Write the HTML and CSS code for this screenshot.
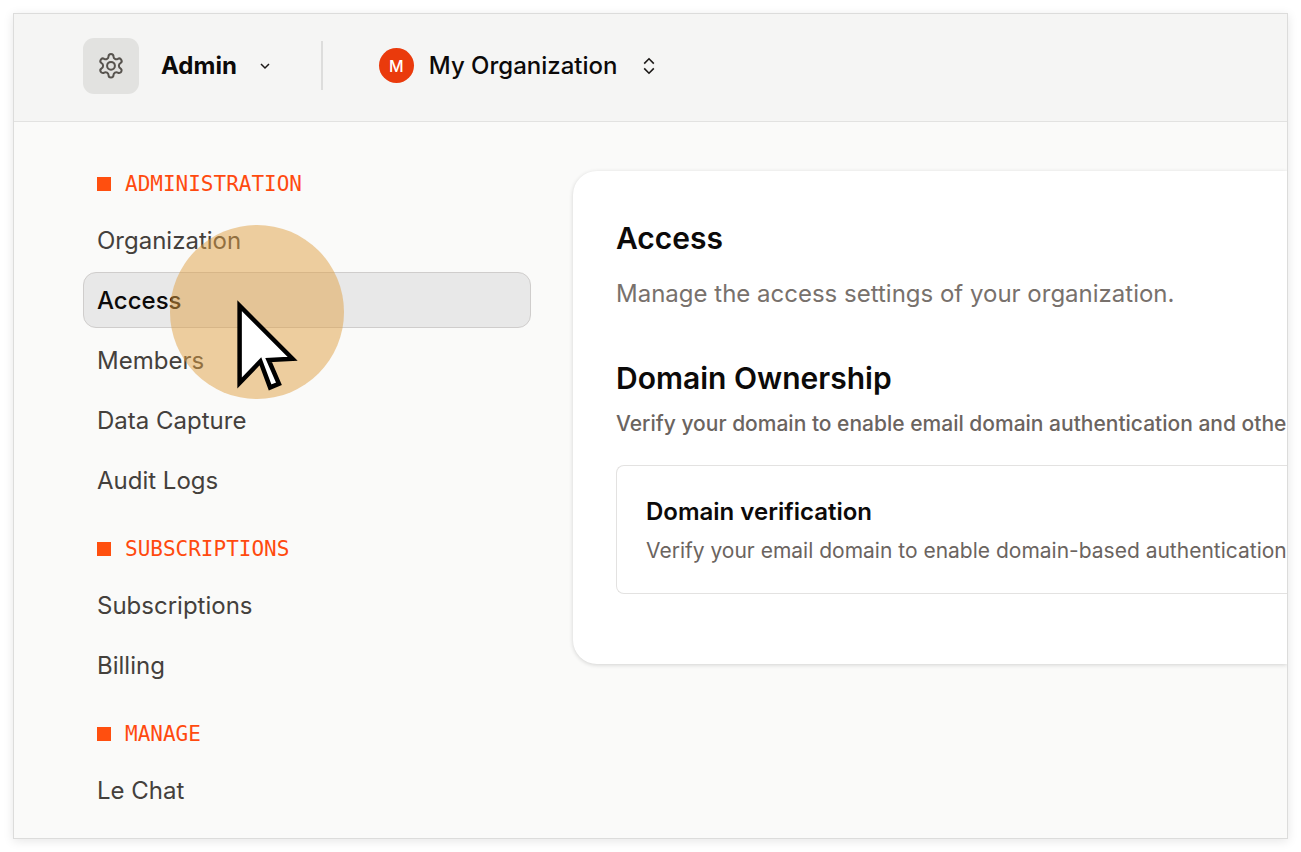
FILE: index.html
```
<!DOCTYPE html>
<html lang="en">
<head>
    <meta charset="UTF-8">
    <meta name="viewport" content="width=device-width, initial-scale=1.0">
    <title>Admin - Access</title>
    <link rel="stylesheet" href="styles.css">
</head>
<body>
    <div class="app">
        <header class="topbar">
            <button type="button" class="menu-button">
                <span class="menu-icon">
                    <svg width="28" height="28" viewBox="0 0 28 28" fill="none" stroke="#57534e" stroke-width="2" stroke-linejoin="round">
                        <path d="M11.5 4.4a2.5 2.5 0 0 1 5 0a2.9 2.9 0 0 0 4.3 2.5a2.5 2.5 0 0 1 2.6 4.3a2.9 2.9 0 0 0 0 5.1a2.5 2.5 0 0 1-2.6 4.3a2.9 2.9 0 0 0-4.3 2.5a2.5 2.5 0 0 1-5 0a2.9 2.9 0 0 0-4.3-2.5a2.5 2.5 0 0 1-2.6-4.3a2.9 2.9 0 0 0 0-5.1a2.5 2.5 0 0 1 2.6-4.3a2.9 2.9 0 0 0 4.3-2.5z"/>
                        <circle cx="14" cy="13.8" r="3.9"/>
                    </svg>
                </span>
                <span class="menu-name">Admin</span>
                <svg width="12" height="12" viewBox="0 0 12 12" fill="none" stroke="#1c1917" stroke-width="1.5">
                    <path d="M2 4l4 4 4-4"/>
                </svg>
            </button>
            <span class="divider"></span>
            <button type="button" class="org-button">
                <span class="avatar">M</span>
                <span class="org-name">My Organization</span>
                <svg width="12" height="18" viewBox="0 0 12 18" fill="none" stroke="#1c1917" stroke-width="1.6">
                    <path d="M1.2 6.6l4.8-4.8 4.8 4.8M1.2 11.4l4.8 4.8 4.8-4.8"/>
                </svg>
            </button>
        </header>

        <div class="layout">
            <nav class="sidebar">
                <section class="nav-group">
                    <h2 class="nav-title">ADMINISTRATION</h2>
                    <a href="#" class="nav-link">Organization</a>
                    <a href="#" class="nav-link active">Access
                        <span class="highlight">
                            <svg class="pointer" width="62" height="92" viewBox="0 0 62 92" fill="#fff" stroke="#000" stroke-width="4.5">
                                <path d="M2.6 5.7V83L23.4 61.3L33.1 87.4L41.9 83.7L31.6 60L55.5 58.7Z"/>
                            </svg>
                        </span>
                    </a>
                    <a href="#" class="nav-link">Members</a>
                    <a href="#" class="nav-link">Data Capture</a>
                    <a href="#" class="nav-link">Audit Logs</a>
                </section>
                <section class="nav-group">
                    <h2 class="nav-title">SUBSCRIPTIONS</h2>
                    <a href="#" class="nav-link">Subscriptions</a>
                    <a href="#" class="nav-link">Billing</a>
                </section>
                <section class="nav-group">
                    <h2 class="nav-title">MANAGE</h2>
                    <a href="#" class="nav-link">Le Chat</a>
                </section>
            </nav>

            <main class="card">
                <h1 class="heading">Access</h1>
                <p class="lead">Manage the access settings of your organization.</p>
                <h2 class="heading">Domain Ownership</h2>
                <p class="description">Verify your domain to enable email domain authentication and other</p>
                <div class="panel">
                    <h3 class="panel-title">Domain verification</h3>
                    <p class="panel-text">Verify your email domain to enable domain-based authentication</p>
                </div>
            </main>
        </div>
    </div>
</body>
</html>
```
FILE: styles.css
```
* {
    box-sizing: border-box;
}

body {
    margin: 0;
    padding: 13px;
    background-color: #fff;
    font-family: Inter, "Liberation Sans", sans-serif;
    color: #0c0a09;
}

h1, h2, h3, p {
    margin: 0;
}

button {
    display: flex;
    align-items: center;
    padding: 0;
    border: none;
    background: none;
    font-family: inherit;
    color: inherit;
    cursor: pointer;
}

.app {
    min-height: calc(100vh - 26px);
    border: 1px solid #dcdcdb;
    background-color: #fafaf9;
    box-shadow: 0 2px 10px rgba(0, 0, 0, 0.1);
    overflow: hidden;
}

/* Top bar */
.topbar {
    display: flex;
    align-items: center;
    height: 108px;
    padding: 0 69px 4px;
    border-bottom: 1px solid #e2e2e1;
    background-color: #f5f5f4;
}

.menu-icon {
    display: flex;
    align-items: center;
    justify-content: center;
    width: 56px;
    height: 56px;
    margin-right: 22px;
    border-radius: 11px;
    background-color: #e2e2e0;
}

.menu-name {
    margin-right: 22px;
    font-size: 24px;
    font-weight: 700;
}

.divider {
    width: 2px;
    height: 49px;
    margin: 0 56px 0 50px;
    background-color: #dddddc;
}

.avatar {
    display: flex;
    align-items: center;
    justify-content: center;
    width: 35px;
    height: 35px;
    margin-right: 15px;
    border-radius: 50%;
    background-color: #ea3a0c;
    color: #fff;
    font-size: 16px;
    font-weight: 500;
}

.org-name {
    margin-right: 25px;
    font-size: 24px;
    font-weight: 500;
}

/* Sidebar */
.layout {
    display: flex;
    align-items: flex-start;
    gap: 42px;
    padding: 34px 0 20px 69px;
}

.sidebar {
    display: flex;
    flex: 0 0 448px;
    flex-direction: column;
    gap: 13px;
}

.nav-group {
    display: flex;
    flex-direction: column;
    gap: 4px;
}

.nav-title {
    display: flex;
    align-items: center;
    gap: 14px;
    height: 56px;
    margin-bottom: -4px;
    padding-left: 14px;
    color: #ff4a0f;
    font-family: "DejaVu Sans Mono", monospace;
    font-size: 21px;
    font-weight: 400;
}

.nav-title::before {
    content: "";
    width: 14px;
    height: 14px;
    background-color: #ff4f0f;
}

.nav-link {
    position: relative;
    display: flex;
    align-items: center;
    height: 56px;
    padding: 0 13px;
    border: 1px solid transparent;
    border-radius: 13px;
    color: #44403c;
    font-size: 24px;
    text-decoration: none;
}

.nav-link.active {
    border-color: #cfcdcc;
    background-color: #e8e8e8;
    color: #0c0a09;
    font-weight: 500;
}

.highlight {
    position: absolute;
    top: -48px;
    left: 86px;
    z-index: 1;
    width: 174px;
    height: 174px;
    border-radius: 50%;
    background-color: rgba(224, 160, 68, 0.5);
}

.pointer {
    position: absolute;
    top: 75px;
    left: 67px;
}

/* Content */
.card {
    flex: 1;
    min-width: 0;
    margin-top: 15px;
    padding: 43px 0 70px 43px;
    border-radius: 24px 0 0 24px;
    background-color: #fff;
    box-shadow: 0 1px 4px rgba(0, 0, 0, 0.16);
    white-space: nowrap;
}

.heading {
    font-size: 30px;
    font-weight: 600;
    line-height: 48px;
}

.lead {
    margin: 16px 0 44px;
    color: #78716c;
    font-size: 24px;
    line-height: 32px;
}

.description {
    margin: 6px 0 25px;
    color: #6b645f;
    font-size: 21px;
    font-weight: 500;
    line-height: 32px;
}

.panel {
    padding: 28px 0 26px 29px;
    border: 1px solid #e3e2e1;
    border-right: none;
    border-radius: 8px 0 0 8px;
}

.panel-title {
    font-size: 24px;
    font-weight: 600;
    line-height: 36px;
}

.panel-text {
    margin-top: 5px;
    color: #6b645f;
    font-size: 21px;
    line-height: 32px;
}
```
